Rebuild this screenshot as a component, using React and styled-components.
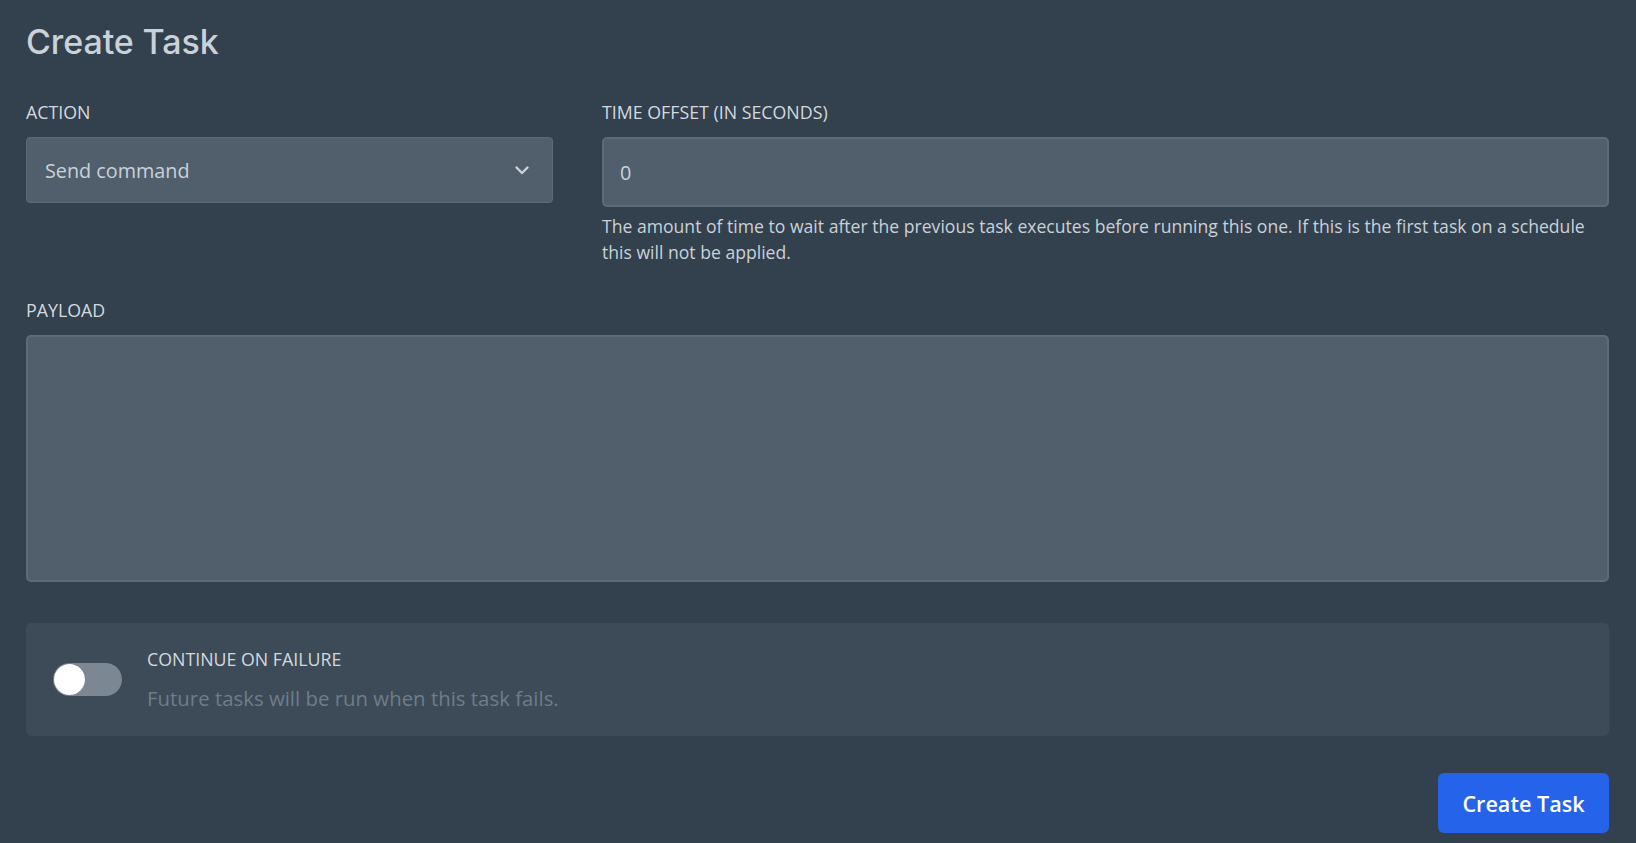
import React from "react";
import styled, { createGlobalStyle } from "styled-components";

const GlobalStyle = createGlobalStyle`
  html, body {
    margin: 0;
    padding: 0;
    background: #33404d;
  }
  body {
    font-family: "Open Sans", "Noto Sans", sans-serif;
    color: #cad1d8;
  }
  * { box-sizing: border-box; }
`;

const Page = styled.div`
  padding: 20px 27px 11px 26px;
  min-height: 843px;
`;

const Title = styled.h2`
  margin: 0;
  font-family: "Inter", "Open Sans", sans-serif;
  font-weight: 500;
  font-size: 34px;
  line-height: 44px;
  color: #cad1d8;
  letter-spacing: -0.1px;
`;

const TopRow = styled.div`
  display: grid;
  grid-template-columns: 527px 1fr;
  column-gap: 49px;
  margin-top: 38px;
`;

const Field = styled.div`
  display: flex;
  flex-direction: column;
  margin-top: ${(p) => p.$top || 0}px;
`;

const Label = styled.label`
  display: block;
  font-size: 17.8px;
  line-height: 20px;
  text-transform: uppercase;
  color: #d3d9df;
  margin-bottom: 15px;
`;

const SelectBox = styled.div`
  height: 66px;
  display: flex;
  align-items: center;
  justify-content: space-between;
  padding: 0 23px 0 18px;
  background: #515f6c;
  border: 1px solid #5d6a78;
  border-radius: 4px;
  font-size: 19.8px;
  color: #cad1d8;
`;

const Input = styled.div`
  height: 70px;
  display: flex;
  align-items: center;
  padding: 0 16px;
  background: #515f6c;
  border: 2px solid #5d6a78;
  border-radius: 5px;
  font-size: 19.8px;
  color: #cad1d8;
`;

const Help = styled.p`
  margin: 6px 0 0;
  font-size: 17.6px;
  line-height: 26px;
  color: #cad1d8;
`;

const TextArea = styled.div`
  height: 247px;
  background: #515f6c;
  border: 2px solid #5d6a78;
  border-radius: 5px;
`;

const Card = styled.div`
  margin-top: 41px;
  height: 113px;
  background: #3d4a57;
  border-radius: 5px;
  display: flex;
  align-items: center;
  padding-left: 27px;
  gap: 25px;
`;

const Track = styled.div`
  width: 69px;
  height: 33px;
  border-radius: 17px;
  background: #7b8793;
  display: flex;
  align-items: center;
  flex-shrink: 0;
`;

const Knob = styled.div`
  width: 31px;
  height: 31px;
  border-radius: 50%;
  background: #ffffff;
  margin-left: 1px;
  box-shadow: 0 0 1px rgba(0, 0, 0, 0.3);
`;

const CardText = styled.div`
  display: flex;
  flex-direction: column;
  gap: 15px;
  margin-top: 2px;
`;

const CardLabel = styled.div`
  font-size: 17.8px;
  line-height: 20px;
  text-transform: uppercase;
  color: #d3d9df;
`;

const CardDesc = styled.div`
  font-size: 20.4px;
  line-height: 28px;
  color: #6f7d8b;
`;

const Footer = styled.div`
  display: flex;
  justify-content: flex-end;
  margin-top: 37px;
`;

const Button = styled.button`
  width: 171px;
  height: 60px;
  border: none;
  border-radius: 6px;
  background: #2563eb;
  color: #ffffff;
  font-family: "Open Sans", "Noto Sans", sans-serif;
  font-weight: 600;
  font-size: 21.6px;
  cursor: pointer;
`;

const Chevron = () => (
  <svg width="14" height="9" viewBox="0 0 14 9" fill="none">
    <path d="M1.5 1.5 L7 7 L12.5 1.5" stroke="#cad1d8" strokeWidth="2.4" strokeLinecap="round" strokeLinejoin="round" />
  </svg>
);

export default function App() {
  return (
    <>
      <GlobalStyle />
      <Page>
        <Title>Create Task</Title>
        <TopRow>
          <Field>
            <Label>Action</Label>
            <SelectBox>
              <span>Send command</span>
              <Chevron />
            </SelectBox>
          </Field>
          <Field>
            <Label>Time offset (in seconds)</Label>
            <Input>0</Input>
            <Help>
              The amount of time to wait after the previous task executes before running this one. If this is the first task on a schedule this will not be applied.
            </Help>
          </Field>
        </TopRow>
        <Field $top={35}>
          <Label>Payload</Label>
          <TextArea />
        </Field>
        <Card>
          <Track>
            <Knob />
          </Track>
          <CardText>
            <CardLabel>Continue on failure</CardLabel>
            <CardDesc>Future tasks will be run when this task fails.</CardDesc>
          </CardText>
        </Card>
        <Footer>
          <Button>Create Task</Button>
        </Footer>
      </Page>
    </>
  );
}
